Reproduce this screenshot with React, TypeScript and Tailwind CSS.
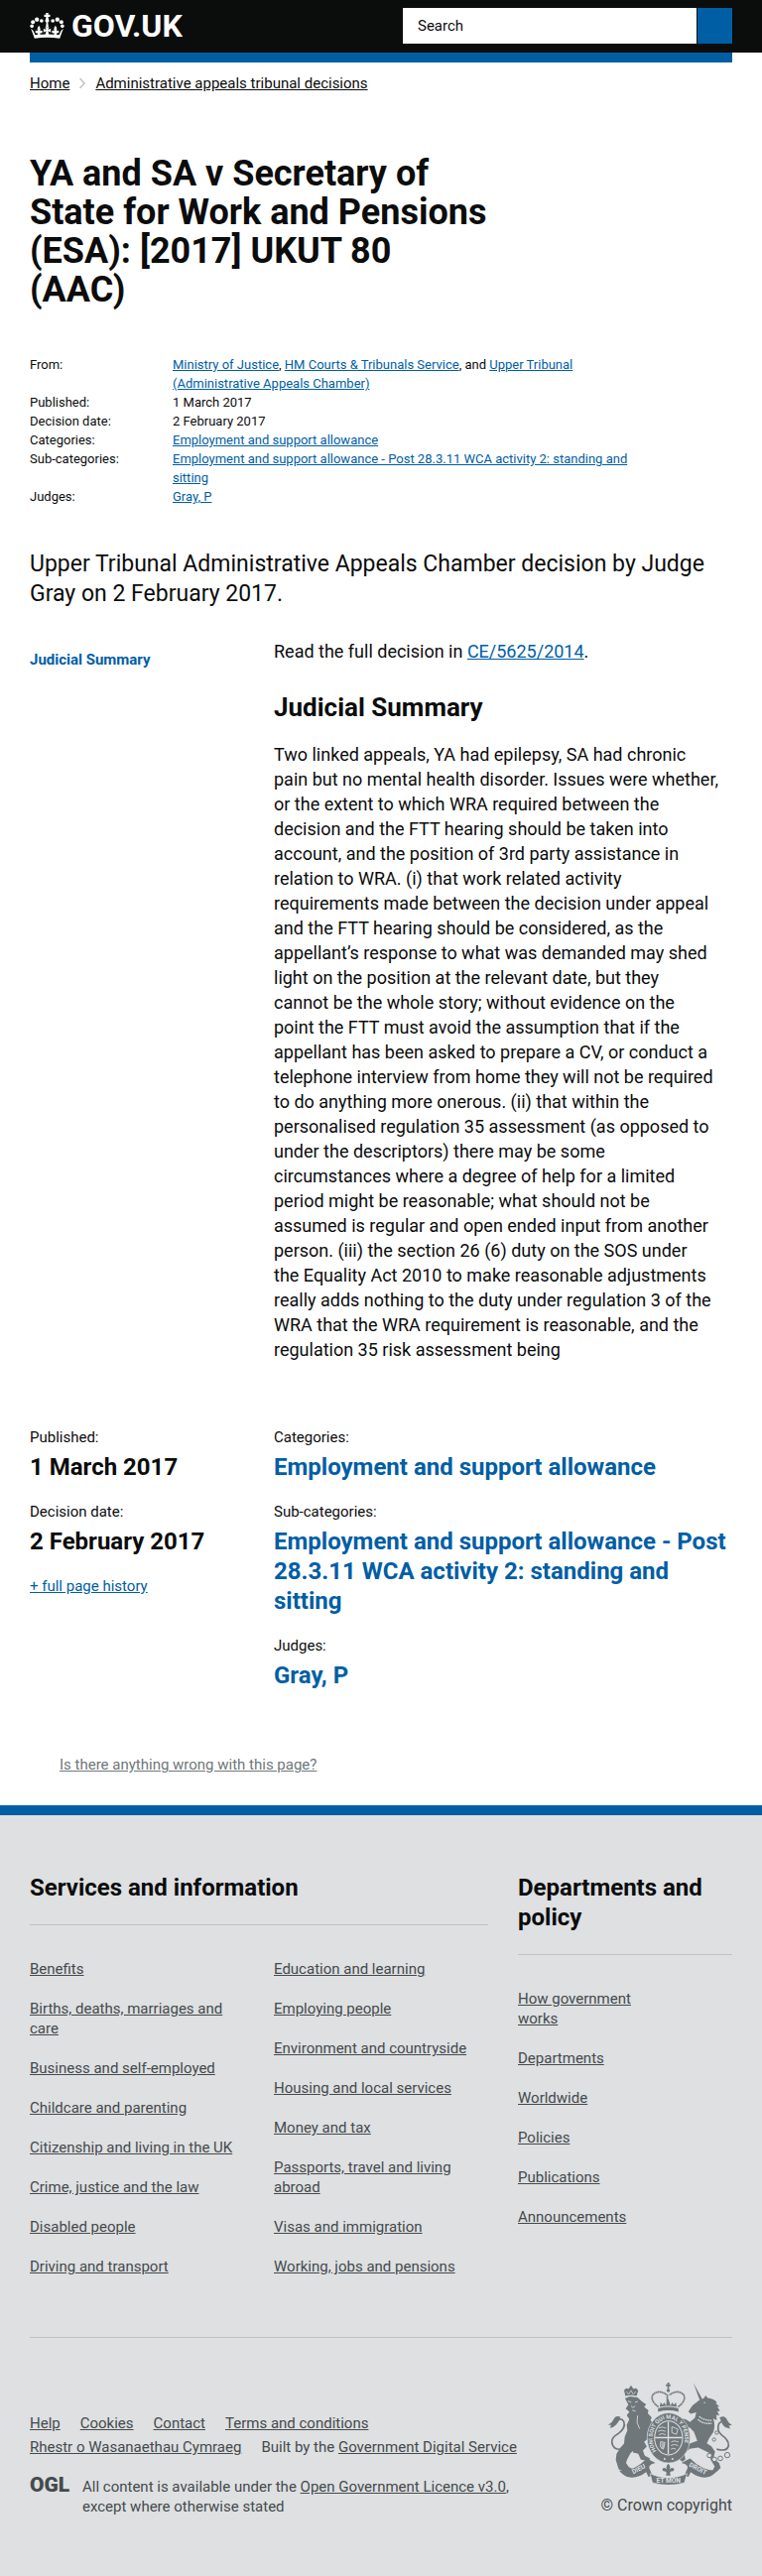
import React from "react";

const FONT = "font-['Roboto','Liberation_Sans',sans-serif]";
const BODY_LINK = "text-[#005ea5] underline";
const FOOTER_LINK = "underline";

const services = [
  [
    "Benefits",
    "Births, deaths, marriages and care",
    "Business and self-employed",
    "Childcare and parenting",
    "Citizenship and living in the UK",
    "Crime, justice and the law",
    "Disabled people",
    "Driving and transport",
  ],
  [
    "Education and learning",
    "Employing people",
    "Environment and countryside",
    "Housing and local services",
    "Money and tax",
    "Passports, travel and living abroad",
    "Visas and immigration",
    "Working, jobs and pensions",
  ],
];

const departments = [
  "How government works",
  "Departments",
  "Worldwide",
  "Policies",
  "Publications",
  "Announcements",
];

const subCategory =
  "Employment and support allowance - Post 28.3.11 WCA activity 2: standing and sitting";

const summary = [
  "Two linked appeals, YA had epilepsy, SA had chronic",
  "pain but no mental health disorder. Issues were whether,",
  "or the extent to which WRA required between the",
  "decision and the FTT hearing should be taken into",
  "account, and the position of 3rd party assistance in",
  "relation to WRA. (i) that work related activity",
  "requirements made between the decision under appeal",
  "and the FTT hearing should be considered, as the",
  "appellant’s response to what was demanded may shed",
  "light on the position at the relevant date, but they",
  "cannot be the whole story; without evidence on the",
  "point the FTT must avoid the assumption that if the",
  "appellant has been asked to prepare a CV, or conduct a",
  "telephone interview from home they will not be required",
  "to do anything more onerous. (ii) that within the",
  "personalised regulation 35 assessment (as opposed to",
  "under the descriptors) there may be some",
  "circumstances where a degree of help for a limited",
  "period might be reasonable; what should not be",
  "assumed is regular and open ended input from another",
  "person. (iii) the section 26 (6) duty on the SOS under",
  "the Equality Act 2010 to make reasonable adjustments",
  "really adds nothing to the duty under regulation 3 of the",
  "WRA that the WRA requirement is reasonable, and the",
  "regulation 35 risk assessment being",
];

function Crown() {
  return (
    <svg viewBox="0 0 104 78" className="h-[26px] w-[35px]" fill="currentColor" aria-hidden="true">
      <path d="M48 0h8l-1 5h6v7h-6l2 8a6 6 0 1 1-10 0l2-8h-6V5h6z" />
      <path d="M50 28h4l2 14h-8z" />
      <circle cx="6" cy="40" r="5.5" />
      <circle cx="9" cy="28" r="6" />
      <circle cx="21" cy="20" r="6.5" />
      <circle cx="35" cy="24" r="5.5" />
      <circle cx="98" cy="40" r="5.5" />
      <circle cx="95" cy="28" r="6" />
      <circle cx="83" cy="20" r="6.5" />
      <circle cx="69" cy="24" r="5.5" />
      <path d="M3 47l11 30q38-6 76 0l11-30-7 7-6 13q-36-5-72 0l-6-13z" />
      <path d="M27 38q7 10 3 17 8-4 8 3-3 5-8 3l2 8H22l2-8q-6 2-8-3 0-7 8-3-4-7 3-17zM77 38q7 10 3 17 8-4 8 3-3 5-8 3l2 8H72l2-8q-6 2-8-3 0-7 8-3-4-7 3-17z" />
      <path d="M46 43h12l-3 8 8-4v12l-8-4 3 13H46l3-13-8 4V47l8 4z" />
    </svg>
  );
}

function CoatOfArms() {
  return (
    <svg viewBox="9 20 376 310" className="h-[103px] w-[125px] text-[#6f777b]" fill="currentColor" aria-hidden="true">
      {/* lion */}
      <path d="M61 61l-4-18 6-6 8 2 7-11 7 11 9-2 6 7-5 17q-17-5-34 0z" />
      <path d="M64 47l7 9 7-12 7 12 8-9" fill="none" stroke="#dee0e2" strokeWidth="2" />
      <path d="M60 68l14-6 24 3 13 12 13 9-6 8 13 10-2 9 12 13-4 8 10 12-4 14 9 18-12 6-4-9-8-6 1 22-18 14-6 10-18 10-10 9-10 18-4 12 8 12 19 10-3 5-26 2-10-6-10-4-4-12-5-16 2-18 11-18 12-14 2-20 8-20-2-16 8-18-8-12 8-10-11-10 8-12z" />
      <path d="M84 212l34-12 8 14-12 12 6 16 16 8-4 8-24-4-8-18-16-4z" />
      <path d="M69 76l10 4M90 80l9-3M78 91l6 5 7-5M82 104l10 3M98 120q-6 22 6 40" fill="none" stroke="#dee0e2" strokeWidth="2.5" />
      <path d="M52 222Q22 226 20 200q0-14 18-24 26-18 18-38-5-10-16-6" fill="none" stroke="currentColor" strokeWidth="5" />
      <path d="M46 124q-15-6-21 8-4 11-16 16 6 2 9 0l-4 10q12-2 19-10 10-10 13-24z" />

      {/* unicorn */}
      <path d="M267 21l27 49-7 4z" />
      <path d="M286 73l12-5 7-9 5 8q20 2 29 14l-4 2 11 9-6 2 8 12-8 1 6 13-9-2 1 16-11-5q8 20 1 41l-13 19-7 15 14 9 11 17-5 20 17 14 5 15-11 10-18 6 6-11 5-10-12-19-4-21-34-17-26 4-16 14 3 18-9 7-11-8 7-12 8-20 20-16 21-7-10-27-13-14-17 7-7 16-10 2 3-17 12-18-16-5-6 10-9 1 5-17 12-9 22 6 12 8 15-13 4-17-17 5-7-7 12-18z" />
      <path d="M281 132q14 14 42 12M285 123q14 12 39 12" fill="none" stroke="#dee0e2" strokeWidth="4" strokeDasharray="5 2" />
      <circle cx="301" cy="81" r="2" fill="#dee0e2" />
      <path d="M338 222q34 9 36-12 0-16-20-30-17-13-10-34 8-13 23-8" fill="none" stroke="currentColor" strokeWidth="5" />
      <path d="M347 126q16-8 23 8 4 9 14 14-7 4-10 2l5 10q-18-2-24-14z" />
      <g fill="#dee0e2" stroke="currentColor" strokeWidth="3">
        <circle cx="338" cy="172" r="5" />
        <circle cx="330" cy="193" r="5" />
        <circle cx="316" cy="241" r="7" />
        <circle cx="331" cy="253" r="7" />
        <circle cx="349" cy="250" r="7" />
        <circle cx="370" cy="240" r="8" />
      </g>

      {/* royal crown */}
      <path d="M188 20h7l-2 5h5v6h-5l1 8h-6l1-8h-5v-6h5zM160 98q31-9 62 0v11q-31-9-62 0z" />
      <circle cx="191" cy="44" r="5" />
      <path d="M161 94q-28-22-15-39 18-15 42 3v29M221 94q28-22 15-39-18-15-42 3" fill="none" stroke="currentColor" strokeWidth="5" strokeDasharray="5 1" />
      <path d="M165 94l3-14 6 8 5-8 5 10 7-22 7 22 5-10 5 8 6-8 3 14q-26-7-52 0z" />

      {/* garter and shield */}
      <ellipse cx="192" cy="188" rx="65" ry="76" stroke="#dee0e2" strokeWidth="2" />
      <ellipse cx="192" cy="188" rx="44" ry="53" fill="#dee0e2" />
      <ellipse cx="192" cy="188" rx="41" ry="50" />
      <path d="M191 139v98M151 187h82" stroke="#dee0e2" strokeWidth="4" />
      <path d="M162 158q9-6 22 0M160 168q10-6 23 0M163 178q9-6 20 0M200 200q9-6 22 0M199 211q10-6 22 0M199 222q8-5 15 0M202 154l18 7-4 16-14-5zM168 199l13 3-5 20q-13-3-8-23zM172 202v18M177 203v15" fill="none" stroke="#dee0e2" strokeWidth="2.5" />
      <path id="garter-arc" d="M156 229A49 59 0 1 1 228 229" fill="none" />
      <text fill="#dee0e2" fontFamily="Roboto" fontWeight="700" fontSize="17">
        <textPath href="#garter-arc" startOffset="2">HONI SOIT QUI MAL Y PENSE</textPath>
      </text>
      <circle cx="180" cy="252" r="3" fill="#dee0e2" />
      <circle cx="204" cy="252" r="3" fill="#dee0e2" />

      {/* motto ribbon */}
      <path d="M42 287q46 3 84-37l26 14q-28 6-15 24l6 14-12 4-7-14q-26 20-54 15-15-4-28-20zM340 287q-44 2-83-37l-26 14q28 6 15 24l-6 14 12 4 7-14q26 20 52 15 16-4 29-20z" />
      <path d="M136 296q55 26 112 0l-8 28q-48 14-97 0z" stroke="#dee0e2" strokeWidth="2" />
      <g fill="#dee0e2" fontFamily="Roboto" fontWeight="700" fontSize="20" textAnchor="middle">
        <text x="104" y="288" transform="rotate(-26 104 288)">DIEU</text>
        <text x="192" y="325">ET MON</text>
        <text x="278" y="287" transform="rotate(27 278 287)">DROIT</text>
      </g>
      <path d="M191 266q9 9 4 17 10-9 14 0 0 8-10 6v3h-3l2 10h-14l2-10h-3v-3q-10 2-10-6 4-9 14 0-5-8 4-17z" />
    </svg>
  );
}

function FooterList({ items }: { items: string[] }) {
  return (
    <ul className="flex flex-col gap-5">
      {items.map((item) => (
        <li key={item}>
          <a href="#" className={FOOTER_LINK}>{item}</a>
        </li>
      ))}
    </ul>
  );
}

function MetaRow({ label, children }: { label: string; children: React.ReactNode }) {
  return (
    <div className="flex">
      <dt className="w-36 shrink-0">{label}</dt>
      <dd>{children}</dd>
    </div>
  );
}

function Fact({ label, children }: { label: string; children: React.ReactNode }) {
  return (
    <div>
      <dt className="text-[15px] leading-5">{label}</dt>
      <dd className="mt-[5px] text-2xl leading-[30px] font-bold">{children}</dd>
    </div>
  );
}

export default function App() {
  return (
    <div className={`${FONT} bg-white text-[#0b0c0c]`}>
      <header>
        <div className="flex h-[53px] items-start justify-between bg-[#0b0c0c] px-[30px] pt-2">
          <a href="#" className="flex h-9 items-center gap-[7px] text-white">
            <Crown />
            <span className="text-[32px] leading-9 font-bold">GOV.UK</span>
          </a>
          <form className="flex h-9 w-[332px] gap-px" onSubmit={(e) => e.preventDefault()}>
            <input
              type="text"
              aria-label="Search"
              placeholder="Search"
              className="min-w-0 flex-1 bg-white px-[15px] text-[15px] outline-none placeholder:text-[#0b0c0c]"
            />
            <button type="submit" aria-label="Search GOV.UK" className="w-[35px] bg-[#005ea5]" />
          </form>
        </div>
        <div className="mx-[30px] h-2.5 bg-[#005ea5]" />
      </header>

      <main className="px-[30px] pb-[31px]">
        <nav aria-label="Breadcrumb" className="pt-[11px]">
          <ol className="flex items-center text-[15px] leading-5">
            <li><a href="#" className="underline">Home</a></li>
            <li aria-hidden="true" className="px-2.5">
              <svg viewBox="0 0 6 10" className="h-2.5 w-1.5" fill="none" stroke="#bfc1c3" strokeWidth="1.5">
                <path d="M.5 0l4.5 5-4.5 5" />
              </svg>
            </li>
            <li><a href="#" className="underline">Administrative appeals tribunal decisions</a></li>
          </ol>
        </nav>

        <h1 className="mt-[62px] max-w-[464px] text-4xl leading-[39px] font-bold">
          YA and SA v Secretary of State for Work and Pensions (ESA): [2017] UKUT 80 (AAC)
        </h1>

        <dl className="mt-[46px] max-w-[624px] text-[13px] leading-[19px]">
          <MetaRow label="From:">
            <a href="#" className={BODY_LINK}>Ministry of Justice</a>,{" "}
            <a href="#" className={BODY_LINK}>HM Courts &amp; Tribunals Service</a>, and{" "}
            <a href="#" className={BODY_LINK}>Upper Tribunal (Administrative Appeals Chamber)</a>
          </MetaRow>
          <MetaRow label="Published:">1 March 2017</MetaRow>
          <MetaRow label="Decision date:">2 February 2017</MetaRow>
          <MetaRow label="Categories:">
            <a href="#" className={BODY_LINK}>Employment and support allowance</a>
          </MetaRow>
          <MetaRow label="Sub-categories:">
            <a href="#" className={BODY_LINK}>{subCategory}</a>
          </MetaRow>
          <MetaRow label="Judges:">
            <a href="#" className={BODY_LINK}>Gray, P</a>
          </MetaRow>
        </dl>

        <p className="mt-[44px] text-[23px] leading-[30px]">
          Upper Tribunal Administrative Appeals Chamber decision by Judge Gray on 2 February 2017.
        </p>

        <div className="mt-[30px] grid grid-cols-[216px_1fr] gap-x-[30px]">
          <nav aria-label="Contents" className="pt-[11px] text-[15px] leading-5 font-bold">
            <a href="#judicial-summary" className="text-[#005ea5]">Judicial Summary</a>
          </nav>
          <article className="text-lg leading-[25px]">
            <p>
              Read the full decision in <a href="#" className={BODY_LINK}>CE/5625/2014</a>.
            </p>
            <h2 id="judicial-summary" className="mt-[29px] text-[26px] leading-[30px] font-bold">
              Judicial Summary
            </h2>
            <p className="mt-5">
              {summary.map((line) => (
                <React.Fragment key={line}>
                  {line}{" "}
                  <br className="hidden md:inline" />
                </React.Fragment>
              ))}
            </p>
          </article>
        </div>

        <div className="mt-[66px] grid grid-cols-[216px_1fr] gap-x-[30px]">
          <div>
            <dl className="flex flex-col gap-5">
              <Fact label="Published:">1 March 2017</Fact>
              <Fact label="Decision date:">2 February 2017</Fact>
            </dl>
            <a href="#" className={`${BODY_LINK} mt-5 block text-[15px] leading-5`}>+ full page history</a>
          </div>
          <dl className="flex flex-col gap-5 [&_a]:text-[#005ea5]">
            <Fact label="Categories:"><a href="#">Employment and support allowance</a></Fact>
            <Fact label="Sub-categories:"><a href="#">{subCategory}</a></Fact>
            <Fact label="Judges:"><a href="#">Gray, P</a></Fact>
          </dl>
        </div>

        <p className="mt-[65px] ml-[30px] text-[15px] leading-5">
          <a href="#" className="text-[#6f777b] underline">Is there anything wrong with this page?</a>
        </p>
      </main>

      <footer className="border-t-10 border-[#005ea5] bg-[#dee0e2] px-[30px] pt-[58px] pb-[60px] text-[15px] leading-5 text-[#454a4c]">
        <div className="grid grid-cols-[1fr_216px] gap-x-[30px] border-b border-[#bfc1c3] pb-[61px]">
          <section>
            <h2 className="border-b border-[#bfc1c3] pb-[22px] text-2xl leading-[30px] font-bold text-[#0b0c0c]">
              Services and information
            </h2>
            <div className="mt-[34px] grid grid-cols-2 gap-x-[30px]">
              {services.map((items) => (
                <FooterList key={items[0]} items={items} />
              ))}
            </div>
          </section>
          <section>
            <h2 className="border-b border-[#bfc1c3] pb-[22px] text-2xl leading-[30px] font-bold text-[#0b0c0c]">
              Departments and policy
            </h2>
            <div className="mt-[34px] w-[130px]">
              <FooterList items={departments} />
            </div>
          </section>
        </div>

        <div className="flex justify-between pt-[45px]">
          <div className="pt-[31px]">
            <ul className="flex max-w-[530px] flex-wrap gap-x-5 gap-y-1">
              {["Help", "Cookies", "Contact", "Terms and conditions", "Rhestr o Wasanaethau Cymraeg"].map((item) => (
                <li key={item}><a href="#" className={FOOTER_LINK}>{item}</a></li>
              ))}
              <li>Built by the <a href="#" className={FOOTER_LINK}>Government Digital Service</a></li>
            </ul>
            <div className="mt-5 flex gap-3">
              <span className="w-[41px] text-[21px] leading-4 font-black">OGL</span>
              <p className="max-w-[470px]">
                All content is available under the{" "}
                <a href="#" className={FOOTER_LINK}>Open Government Licence v3.0</a>,
                <br className="hidden md:inline" /> except where otherwise stated
              </p>
            </div>
          </div>
          <a href="#" className="flex flex-col items-end gap-[11px]">
            <CoatOfArms />
            <span className="text-base leading-5">© Crown copyright</span>
          </a>
        </div>
      </footer>
    </div>
  );
}
